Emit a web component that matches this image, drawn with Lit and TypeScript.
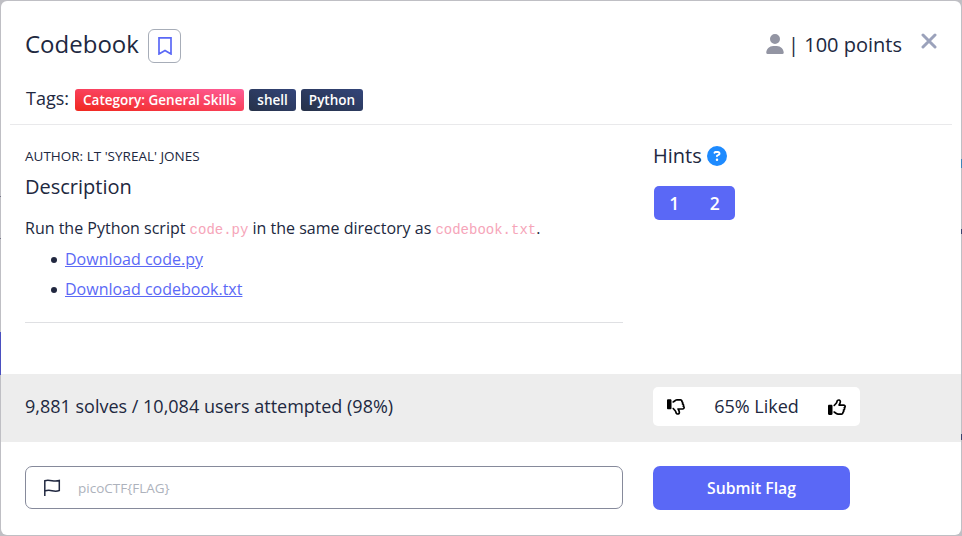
import { LitElement, html, css, svg } from "lit";
import { customElement, property } from "lit/decorators.js";

const THUMB = svg`<path d="M323.8 34.8c-38.2-10.9-78.1 11.2-89 49.4l-5.7 20c-3.7 13-10.4 25-19.5 35l-51.3 56.4c-8.9 9.8-8.2 25 1.6 33.9s25 8.2 33.9-1.6l51.3-56.4c14.1-15.5 24.4-34 30.1-54.1l5.7-20c3.6-12.7 16.9-20.1 29.7-16.5s20.1 16.9 16.5 29.7l-5.7 20c-5.7 19.9-14.7 38.7-26.6 55.5c-5.2 7.3-5.8 16.9-1.7 24.9s12.3 13 21.3 13L448 224c8.8 0 16 7.2 16 16c0 6.8-4.3 12.7-10.4 15c-7.4 2.8-13 9-14.9 16.7s.1 15.8 5.3 21.7c2.5 2.8 4 6.5 4 10.6c0 7.8-5.6 14.3-13 15.7c-8.2 1.6-15.1 7.3-18 15.2s-1.6 16.7 3.6 23.3c2.1 2.7 3.4 6.1 3.4 9.9c0 6.7-4.2 12.6-10.2 14.9c-11.5 4.5-17.7 16.9-14.4 28.8c.4 1.3 .6 2.8 .6 4.3c0 8.8-7.2 16-16 16H286.5c-12.6 0-25-3.7-35.5-10.7l-61.7-41.1c-11-7.4-25.9-4.4-33.3 6.7s-4.4 25.9 6.7 33.3l61.7 41.1c18.4 12.3 40 18.8 62.1 18.8H384c34.7 0 62.9-27.6 64-62c14.6-11.7 24-29.7 24-50c0-4.5-.5-8.8-1.3-13c15.4-11.7 25.3-30.2 25.3-51c0-6.5-1-12.8-2.8-18.7C504.8 273.7 512 257.7 512 240c0-35.3-28.6-64-64-64l-92.3 0c4.7-10.4 8.7-21.2 11.8-32.2l5.7-20c10.9-38.2-11.2-78.1-49.4-89zM32 192c-17.7 0-32 14.3-32 32V448c0 17.7 14.3 32 32 32H96c17.7 0 32-14.3 32-32V224c0-17.7-14.3-32-32-32H32z"/>`;

@customElement("tag-badge")
class TagBadge extends LitElement {
  @property({ reflect: true }) kind = "plain";
  static styles = css`
    :host {
      display: flex;
      align-items: center;
      height: 22px;
      box-sizing: border-box;
      padding: 0 8px;
      border-radius: 3px;
      color: #fff;
      font: 600 13.5px/22px "Open Sans", sans-serif;
      white-space: nowrap;
      background: linear-gradient(to top right, #263148, #33457a);
    }
    :host([kind="category"]) {
      background: linear-gradient(to top right, #f0281e, #f9405a 50%, #fe5d98);
    }
  `;
  render() {
    return html`<slot></slot>`;
  }
}

@customElement("app-root")
class AppRoot extends LitElement {
  static styles = css`
    :host {
      display: block;
      box-sizing: border-box;
      width: 962px;
      height: 536px;
      padding: 1px;
      overflow: hidden;
      background:
        linear-gradient(#4a4fc0, #4a4fc0) 0 332px / 1px 43px no-repeat,
        linear-gradient(#3a4470, #3a4470) 961px 229px / 1px 5px no-repeat,
        linear-gradient(#3a4470, #3a4470) 961px 434px / 1px 6px no-repeat,
        linear-gradient(#3f86b8, #3f86b8) 961px 159px / 1px 9px no-repeat,
        linear-gradient(#77778a, #77778a) 0 196px / 1px 1px no-repeat,
        linear-gradient(#77778a, #77778a) 0 238px / 1px 1px no-repeat,
        #bfbfc4;
      font-family: "Open Sans", sans-serif;
      color: #212840;
    }
    svg { display: block; flex: none; }
    .modal {
      height: 534px;
      border-radius: 6px;
      overflow: hidden;
      background: #fff;
      display: flex;
      flex-direction: column;
    }
    .head {
      height: 123px;
      box-sizing: border-box;
      margin: 0 9px 0 9px;
      padding: 28px 15px 0;
      flex: none;
    }
    .rule { height: 1px; background: #e9e9eb; margin: 0 9px; flex: none; }
    .title-row { display: flex; align-items: center; height: 34px; }
    .title { font-size: 24px; line-height: 34px; width: 123px; margin-top: -4px; }
    .bookmark {
      width: 33px; height: 34px; box-sizing: border-box;
      border: 1px solid #a7adb8; border-radius: 6px;
      display: flex; align-items: center; justify-content: center;
    }
    .points { margin-left: auto; display: flex; align-items: center; height: 34px; font-size: 20px; margin-top: -4px; }
    .points span { margin-left: 4px; }
    .close { margin: -11px 0.5px 0 18.5px; }
    .tags { display: flex; align-items: center; gap: 5px; margin-top: 24px; height: 26px; }
    .tags .label { font-size: 18px; line-height: 24px; width: 44px; margin-top: -4px; padding-left: 1px; }
    .body { display: grid; grid-template-columns: 598px 1fr; column-gap: 30px; padding: 0 24px; height: 249px; flex: none; }
    .author { font-size: 13.5px; line-height: 20px; margin-top: 21px; }
    .desc { font-size: 20px; line-height: 28px; margin-top: 7px; }
    .text { font-size: 16px; line-height: 24px; margin-top: 15px; white-space: nowrap; }
    code { font-family: "Liberation Mono", monospace; font-size: 14px; color: #f6a5b9; }
    ul { margin: 2px 0 0; padding: 0 0 0 26px; font-size: 16px; list-style: none; }
    li { line-height: 30px; display: flex; align-items: center; gap: 8px; }
    li::before { content: ""; width: 6px; height: 6px; border-radius: 50%; background: #212840; margin-top: 2px; }
    a { color: #5b69f6; text-decoration: underline; }
    .line { height: 1px; background: #dfe0e3; margin-top: 18px; }
    .hints { display: flex; align-items: center; gap: 5px; font-size: 20px; line-height: 28px; margin-top: 17px; }
    .pills {
      display: flex; width: 81px; height: 34px; margin: 16px 0 0 1px;
      background: #5a68f6; border-radius: 5px; color: #fff;
      font: 600 17.5px/34px "Open Sans", sans-serif;
    }
    .pills span { flex: 1; text-align: center; }
    .stats, .foot { display: grid; grid-template-columns: 598px 1fr; column-gap: 30px; padding: 0 24px; flex: none; }
    .stats { height: 68px; background: #ededed; align-items: center; font-size: 18px; }
    .stats .count { margin-top: -4px; white-space: nowrap; }
    .liked {
      width: 207px; height: 39px; box-sizing: border-box; margin-top: -3px;
      display: flex; align-items: center; justify-content: space-between;
      padding: 0 14px; background: #fff; border-radius: 5px;
    }
    .liked span { margin-top: -2px; }
    .liked svg.down { transform: scaleY(-1); }
    .foot { padding-top: 24px; }
    .input {
      height: 43px; box-sizing: border-box; border: 1px solid #868a9b; border-radius: 7px;
      display: flex; align-items: center; padding-left: 17px; gap: 17px;
      font-size: 13.5px; color: #adb2bc;
    }
    .submit {
      width: 197px; height: 44px; border-radius: 7px; background: #5a68f6; color: #fff;
      font: 600 15.75px/44px "Open Sans", sans-serif; text-align: center;
    }
  `;

  render() {
    return html`
      <div class="modal">
        <div class="head">
          <div class="title-row">
            <div class="title">Codebook</div>
            <div class="bookmark">
              <svg width="14" height="18" viewBox="0 0 14 18" fill="none" stroke="#5a68f6" stroke-width="1.7">
                <path d="M1 0.8H13V17L7 13.600L1 17Z" />
              </svg>
            </div>
            <div class="points">
              <svg width="18" height="20" viewBox="0 0 448 512" fill="#9395a3">
                <path d="M224 256A128 128 0 1 0 224 0a128 128 0 1 0 0 256zm-45.7 48C79.8 304 0 383.8 0 482.3C0 498.7 13.3 512 29.7 512H418.3c16.4 0 29.7-13.3 29.7-29.7C448 383.8 368.2 304 269.7 304H178.3z" />
              </svg>
              <span>| 100 points</span>
            </div>
            <svg class="close" width="16" height="16" viewBox="0 0 16 16" stroke="#9ba2bb" stroke-width="3" stroke-linecap="round">
              <path d="M2 2L14 14M14 2L2 14" />
            </svg>
          </div>
          <div class="tags">
            <div class="label">Tags:</div>
            <tag-badge kind="category">Category: General Skills</tag-badge>
            <tag-badge>shell</tag-badge>
            <tag-badge>Python</tag-badge>
          </div>
        </div>
        <div class="rule"></div>
        <div class="body">
          <div>
            <div class="author">AUTHOR: LT 'SYREAL' JONES</div>
            <div class="desc">Description</div>
            <div class="text">Run the Python script <code>code.py</code> in the same directory as <code>codebook.txt</code>.</div>
            <ul>
              <li><a>Download code.py</a></li>
              <li><a>Download codebook.txt</a></li>
            </ul>
            <div class="line"></div>
          </div>
          <div>
            <div class="hints">
              <span>Hints</span>
              <svg width="20" height="20" viewBox="0 0 512 512" fill="#1e8bff">
                <path d="M256 512A256 256 0 1 0 256 0a256 256 0 1 0 0 512zM169.8 165.3c7.9-22.3 29.1-37.3 52.8-37.3h58.3c34.9 0 63.1 28.3 63.1 63.1c0 22.6-12.1 43.5-31.7 54.8L280 264.4c-.2 13-10.9 23.6-24 23.6c-13.3 0-24-10.7-24-24V250.5c0-8.6 4.6-16.5 12.1-20.8l44.3-25.4c4.7-2.7 7.6-7.7 7.6-13.1c0-8.4-6.8-15.1-15.1-15.1H222.6c-3.4 0-6.4 2.1-7.5 5.3l-.4 1.2c-4.4 12.5-18.2 19-30.6 14.6s-19-18.2-14.6-30.6l.4-1.2zM224 352a32 32 0 1 1 64 0 32 32 0 1 1 -64 0z" />
              </svg>
            </div>
            <div class="pills"><span>1</span><span>2</span></div>
          </div>
        </div>
        <div class="stats">
          <div class="count">9,881 solves / 10,084 users attempted (98%)</div>
          <div class="liked">
            <svg class="down" width="18" height="18" viewBox="0 0 512 512" fill="#000">${THUMB}</svg>
            <span>65% Liked</span>
            <svg width="18" height="18" viewBox="0 0 512 512" fill="#000">${THUMB}</svg>
          </div>
        </div>
        <div class="foot">
          <div class="input">
            <svg width="18" height="18" viewBox="0 0 18 18" fill="none" stroke="#212840" stroke-width="1.5">
              <path d="M1.8 17V1.700C4 1 6.200 1.200 9 1.700S14 2.200 16.300 1.500V11.500C14 12.400 12 12.400 9 11.700S4 11.200 1.800 12" />
            </svg>
            <span>picoCTF{FLAG}</span>
          </div>
          <div class="submit">Submit Flag</div>
        </div>
      </div>
    `;
  }
}
